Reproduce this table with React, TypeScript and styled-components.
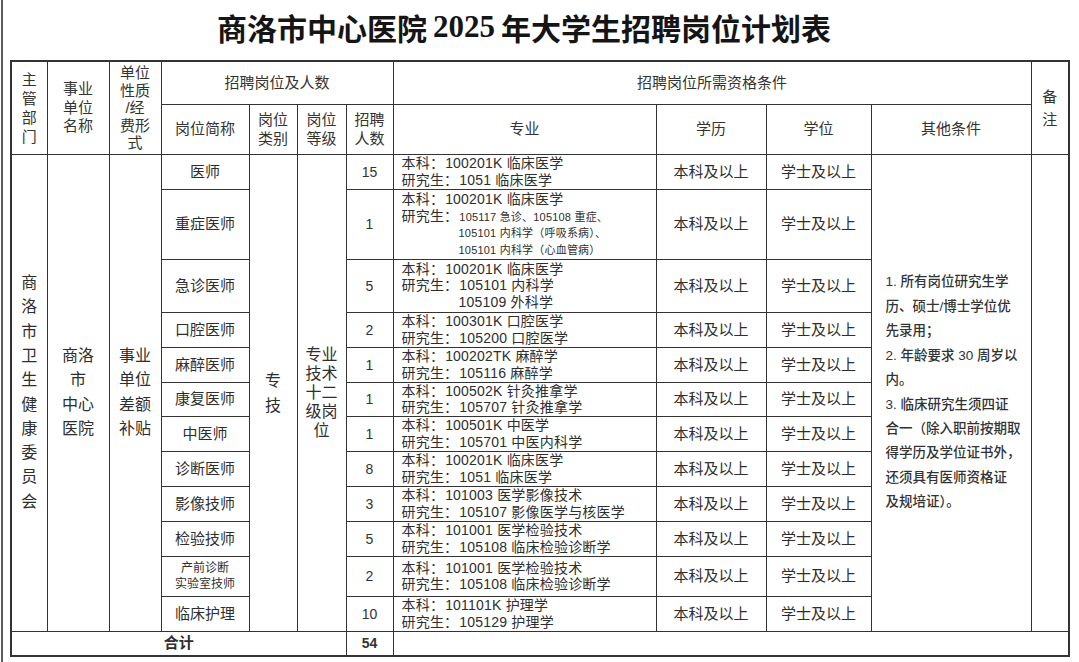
import React from 'react'
import styled, { createGlobalStyle } from 'styled-components'

const GlobalStyle = createGlobalStyle`
  html, body {
    margin: 0;
    padding: 0;
    background: #fff;
  }
  body {
    font-family: 'Liberation Sans', 'Noto Sans CJK SC', sans-serif;
    color: #2e2e2e;
  }
`

type MajorLine = { label?: string; code: string; small?: boolean }

type Post = {
  title: string
  small?: boolean
  count: number
  height: number
  major: MajorLine[]
}

const ben = (code: string): MajorLine => ({ label: '本科：', code })
const yan = (code: string, small?: boolean): MajorLine => ({ label: '研究生：', code, small })

const posts: Post[] = [
  { title: '医师', count: 15, height: 35, major: [ben('100201K 临床医学'), yan('1051 临床医学')] },
  {
    title: '重症医师',
    count: 1,
    height: 70,
    major: [
      ben('100201K 临床医学'),
      yan('105117 急诊、105108 重症、', true),
      { code: '105101 内科学（呼吸系病）、', small: true },
      { code: '105101 内科学（心血管病）', small: true }
    ]
  },
  {
    title: '急诊医师',
    count: 5,
    height: 53,
    major: [ben('100201K 临床医学'), yan('105101 内科学'), { code: '105109 外科学' }]
  },
  { title: '口腔医师', count: 2, height: 35, major: [ben('100301K 口腔医学'), yan('105200 口腔医学')] },
  { title: '麻醉医师', count: 1, height: 35, major: [ben('100202TK 麻醉学'), yan('105116 麻醉学')] },
  { title: '康复医师', count: 1, height: 34, major: [ben('100502K 针灸推拿学'), yan('105707 针灸推拿学')] },
  { title: '中医师', count: 1, height: 35, major: [ben('100501K 中医学'), yan('105701 中医内科学')] },
  { title: '诊断医师', count: 8, height: 35, major: [ben('100201K 临床医学'), yan('1051 临床医学')] },
  { title: '影像技师', count: 3, height: 35, major: [ben('101003 医学影像技术'), yan('105107 影像医学与核医学')] },
  { title: '检验技师', count: 5, height: 35, major: [ben('101001 医学检验技术'), yan('105108 临床检验诊断学')] },
  {
    title: '产前诊断\n实验室技师',
    small: true,
    count: 2,
    height: 40,
    major: [ben('101001 医学检验技术'), yan('105108 临床检验诊断学')]
  },
  { title: '临床护理', count: 10, height: 35, major: [ben('101101K 护理学'), yan('105129 护理学')] }
]

const otherConditions = [
  '1. 所有岗位研究生学',
  '历、硕士/博士学位优',
  '先录用；',
  '2. 年龄要求 30 周岁以',
  '内。',
  '3. 临床研究生须四证',
  '合一（除入职前按期取',
  '得学历及学位证书外，',
  '还须具有医师资格证',
  '及规培证）。'
].join('\n')

const colWidths = [36, 62, 52, 88, 48, 49, 47, 263, 110, 105, 160, 38]

const Page = styled.div`
  width: 1078px;
  height: 662px;
  box-sizing: border-box;
  margin-left: 1px;
  border-left: 2px solid #5a5a5a;
  padding-left: 7px;
  overflow: hidden;
`

const Title = styled.h1`
  margin: 0;
  height: 60px;
  width: 1058px;
  box-sizing: border-box;
  padding: 0 30px 6px 0;
  display: flex;
  align-items: center;
  justify-content: center;
  font-family: 'Noto Sans CJK SC', sans-serif;
  font-size: 30px;
  font-weight: 700;
  color: #151515;
  white-space: pre;
`

const Year = styled.span`
  font-family: 'Liberation Serif', serif;
  font-weight: 700;
  font-size: 31px;
  margin: 0 6px;
`

const Sheet = styled.table`
  width: 1058px;
  table-layout: fixed;
  border-collapse: collapse;
  border: 2px solid #333;
`

const Row = styled.tr<{ $h: number }>`
  height: ${p => p.$h}px;
`

const Cell = styled.td<{ $size?: number; $lh?: number; $bold?: boolean }>`
  border: 1.5px solid #333;
  padding: 0;
  text-align: center;
  vertical-align: middle;
  font-family: 'Liberation Sans', 'Noto Sans CJK SC', sans-serif;
  font-size: ${p => p.$size ?? 15}px;
  line-height: ${p => p.$lh ?? 18}px;
  font-weight: ${p => (p.$bold ? 700 : 400)};
  color: #2e2e2e;
  white-space: pre-line;
  overflow: hidden;
`

const HeadCell = styled(Cell).attrs({ as: 'th' })`
  font-weight: 400;
  color: #333;
`

const MajorCell = styled(Cell)`
  text-align: left;
  padding: 0 6px 0 8px;
  font-size: 14px;
  line-height: 16.5px;
  white-space: nowrap;
`

const MajorRow = styled.div<{ $indent: boolean }>`
  height: 16.5px;
  padding-left: ${p => (p.$indent ? '56px' : '0')};
  letter-spacing: 0.2px;
`

const Code = styled.span<{ $small?: boolean }>`
  font-size: ${p => (p.$small ? 11 : 14)}px;
  margin-left: 1px;
`

const NoteCell = styled(Cell)`
  text-align: left;
  padding: 0 8px 0 14px;
  font-size: 13.5px;
  line-height: 24.4px;
  font-weight: 500;
  white-space: pre;
  color: #333;
`

const Count = styled(Cell)`
  font-size: 14px;
  color: #333;
`

export default function App() {
  return (
    <Page>
      <GlobalStyle />
      <Title>
        商洛市中心医院<Year>2025</Year>年大学生招聘岗位计划表
      </Title>
      <Sheet>
        <colgroup>
          {colWidths.map((w, i) => (
            <col key={i} style={{ width: w }} />
          ))}
        </colgroup>
        <thead>
          <Row $h={43}>
            <HeadCell rowSpan={2} $lh={19}>{'主\n管\n部\n门'}</HeadCell>
            <HeadCell rowSpan={2} $lh={18.5}>{'事业\n单位\n名称'}</HeadCell>
            <HeadCell rowSpan={2} $lh={17.5}>{'单位\n性质\n/经\n费形\n式'}</HeadCell>
            <HeadCell colSpan={4}>招聘岗位及人数</HeadCell>
            <HeadCell colSpan={4}>招聘岗位所需资格条件</HeadCell>
            <HeadCell rowSpan={2} $lh={23}>{'备\n注'}</HeadCell>
          </Row>
          <Row $h={50}>
            <HeadCell>岗位简称</HeadCell>
            <HeadCell $lh={19}>{'岗位\n类别'}</HeadCell>
            <HeadCell $lh={19}>{'岗位\n等级'}</HeadCell>
            <HeadCell $lh={19}>{'招聘\n人数'}</HeadCell>
            <HeadCell>专业</HeadCell>
            <HeadCell>学历</HeadCell>
            <HeadCell>学位</HeadCell>
            <HeadCell>其他条件</HeadCell>
          </Row>
        </thead>
        <tbody>
          {posts.map((p, i) => (
            <Row key={i} $h={p.height}>
              {i === 0 && (
                <>
                  <Cell rowSpan={posts.length} $size={16} $lh={24.3}>
                    {'商\n洛\n市\n卫\n生\n健\n康\n委\n员\n会'}
                  </Cell>
                  <Cell rowSpan={posts.length} $size={16} $lh={24.5}>
                    {'商洛\n市\n中心\n医院'}
                  </Cell>
                  <Cell rowSpan={posts.length} $size={16} $lh={24.5}>
                    {'事业\n单位\n差额\n补贴'}
                  </Cell>
                </>
              )}
              <Cell $size={p.small ? 12 : 15} $lh={p.small ? 16 : 18}>
                {p.title}
              </Cell>
              {i === 0 && (
                <>
                  <Cell rowSpan={posts.length} $size={16} $lh={25}>
                    {'专\n技'}
                  </Cell>
                  <Cell rowSpan={posts.length} $size={16} $lh={19}>
                    {'专业\n技术\n十二\n级岗\n位'}
                  </Cell>
                </>
              )}
              <Count>{p.count}</Count>
              <MajorCell>
                {p.major.map((m, j) => (
                  <MajorRow key={j} $indent={!m.label}>
                    {m.label}
                    <Code $small={m.small}>{m.code}</Code>
                  </MajorRow>
                ))}
              </MajorCell>
              <Cell>本科及以上</Cell>
              <Cell>学士及以上</Cell>
              {i === 0 && (
                <>
                  <NoteCell rowSpan={posts.length}>{otherConditions}</NoteCell>
                  <Cell rowSpan={posts.length} />
                </>
              )}
            </Row>
          ))}
          <Row $h={25}>
            <Cell colSpan={6} $bold>
              合计
            </Cell>
            <Count $bold>54</Count>
            <Cell colSpan={5} />
          </Row>
        </tbody>
      </Sheet>
    </Page>
  )
}
